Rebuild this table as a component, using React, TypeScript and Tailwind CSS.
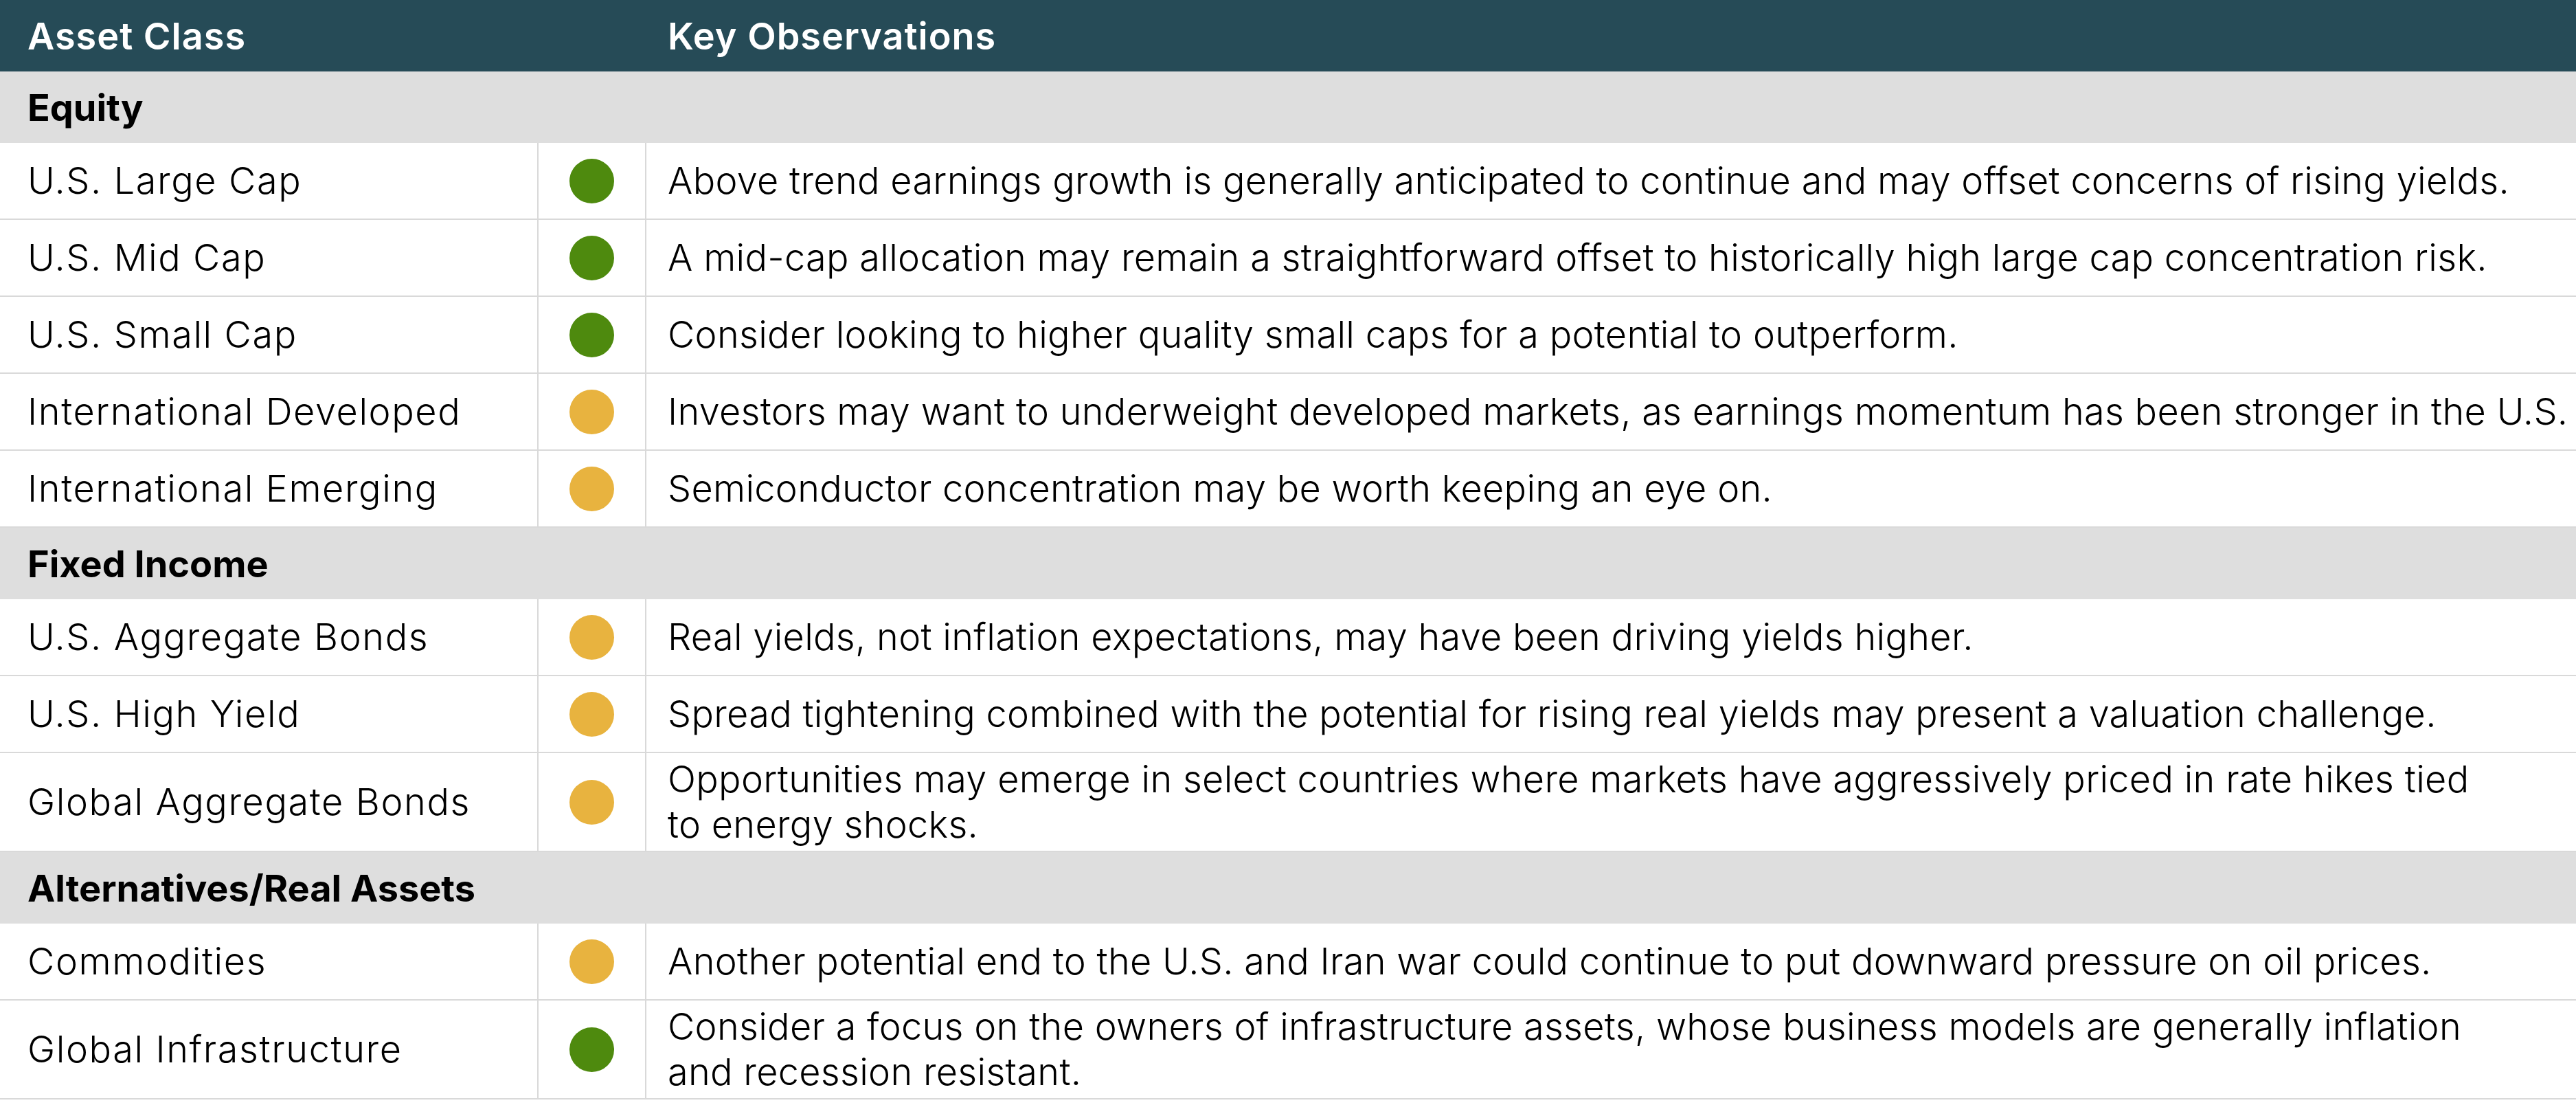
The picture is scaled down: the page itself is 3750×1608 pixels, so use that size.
type Signal = "green" | "amber";

type Row = { name: string; signal: Signal; note: string[] };

type Group = { title: string; rows: Row[] };

// notes are kept as their printed lines so the wrap follows the source table
const groups: Group[] = [
  {
    title: "Equity",
    rows: [
      { name: "U.S. Large Cap", signal: "green", note: ["Above trend earnings growth is generally anticipated to continue and may offset concerns of rising yields."] },
      { name: "U.S. Mid Cap", signal: "green", note: ["A mid-cap allocation may remain a straightforward offset to historically high large cap concentration risk."] },
      { name: "U.S. Small Cap", signal: "green", note: ["Consider looking to higher quality small caps for a potential to outperform."] },
      { name: "International Developed", signal: "amber", note: ["Investors may want to underweight developed markets, as earnings momentum has been stronger in the U.S."] },
      { name: "International Emerging", signal: "amber", note: ["Semiconductor concentration may be worth keeping an eye on."] },
    ],
  },
  {
    title: "Fixed Income",
    rows: [
      { name: "U.S. Aggregate Bonds", signal: "amber", note: ["Real yields, not inflation expectations, may have been driving yields higher."] },
      { name: "U.S. High Yield", signal: "amber", note: ["Spread tightening combined with the potential for rising real yields may present a valuation challenge."] },
      {
        name: "Global Aggregate Bonds",
        signal: "amber",
        note: ["Opportunities may emerge in select countries where markets have aggressively priced in rate hikes tied", "to energy shocks."],
      },
    ],
  },
  {
    title: "Alternatives/Real Assets",
    rows: [
      { name: "Commodities", signal: "amber", note: ["Another potential end to the U.S. and Iran war could continue to put downward pressure on oil prices."] },
      {
        name: "Global Infrastructure",
        signal: "green",
        note: ["Consider a focus on the owners of infrastructure assets, whose business models are generally inflation", "and recession resistant."],
      },
    ],
  },
];

const dotColor: Record<Signal, string> = {
  green: "bg-[#4e8a0e]",
  amber: "bg-[#e8b33f]",
};

export default function App() {
  return (
    <div className="w-[3750px] min-h-[1608px] overflow-hidden bg-white text-black font-['Inter',sans-serif]">
      {/* Header */}
      <div className="grid grid-cols-[784px_157px_1fr] h-[104px] items-center bg-[#264b57] text-white text-[54px] font-semibold tracking-[1px]">
        <div className="pl-[40px]">Asset Class</div>
        <div />
        <div className="pl-[31px]">Key Observations</div>
      </div>

      {groups.map((group) => (
        <section key={group.title}>
          <div className="flex h-[104px] items-center bg-[#dedede] pl-[40px] text-[54px] font-bold">
            {group.title}
          </div>
          {group.rows.map((row) => (
            <div
              key={row.name}
              className="grid grid-cols-[784px_157px_1fr] min-h-[112px] border-b-2 border-[#d9d9d9] text-[54px] font-light leading-[66px]"
            >
              <div className="flex items-center border-r-2 border-[#d9d9d9] pl-[40px] py-[5px] tracking-[1.6px]">
                {row.name}
              </div>
              <div className="flex items-center justify-center border-r-2 border-[#d9d9d9]">
                <span className={`h-[65px] w-[65px] rounded-full ${dotColor[row.signal]}`} />
              </div>
              <div className="flex flex-col justify-center pl-[31px] py-[5px] tracking-[0.3px]">
                {row.note.map((line) => (
                  <span key={line} className="whitespace-nowrap">
                    {line}
                  </span>
                ))}
              </div>
            </div>
          ))}
        </section>
      ))}
    </div>
  );
}
